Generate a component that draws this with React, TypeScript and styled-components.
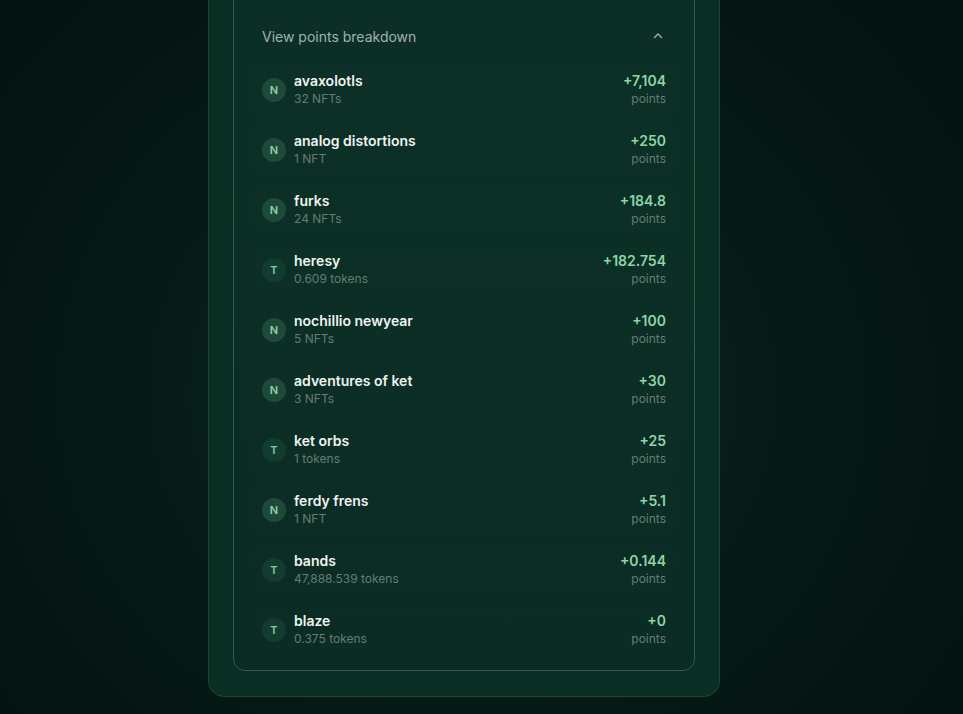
import styled, { createGlobalStyle } from "styled-components";

const Global = createGlobalStyle`
    html, body {
        margin: 0;
        padding: 0;
        height: 100%;
        overflow: hidden;
    }
    body {
        background: radial-gradient(ellipse 60% 75% at 48% 55%, #0a2a21 0%, #071b16 55%, #041310 100%);
        font-family: Inter, "Noto Sans", sans-serif;
        -webkit-font-smoothing: antialiased;
    }
`;

const Page = styled.div`
    display: flex;
    justify-content: center;
    padding-right: 35px;
    height: 714px;
    overflow: hidden;
`;
const Card = styled.div`
    width: 512px;
    box-sizing: border-box;
    margin-top: -58px;
    align-self: flex-start;
    padding: 24px 24px 25px;
    background: #0a2d24;
    border: 1px solid #1b4738;
    border-radius: 16px;
`;
const Breakdown = styled.div`
    box-sizing: border-box;
    padding: 40px 16px 14px;
    background: linear-gradient(180deg, #0b2f26 0%, #0a2b23 100%);
    border: 1px solid #2b5b49;
    border-radius: 12px;
`;
const Head = styled.div`
    display: flex;
    align-items: center;
    justify-content: space-between;
    height: 56px;
    padding: 0 14px 0 12px;
    color: #a1b3ab;
    font-size: 14px;
`;
const List = styled.div`
    display: flex;
    flex-direction: column;
    gap: 8px;
`;
const Row = styled.div`
    display: flex;
    align-items: center;
    height: 52px;
    padding: 0 12px;
    border-radius: 8px;
    background: rgba(255, 255, 255, 0.006);
`;
const Avatar = styled.div<{ $kind: "N" | "T" }>`
    width: 24px;
    height: 24px;
    border-radius: 50%;
    flex-shrink: 0;
    display: flex;
    align-items: center;
    justify-content: center;
    background: ${(p) => (p.$kind === "N" ? "#1f4a3b" : "#123c2f")};
    color: ${(p) => (p.$kind === "N" ? "#8fd2a6" : "#86c9a0")};
    font-size: 11px;
    font-weight: 600;
    margin: -1px 8px 0 0;
`;
const Info = styled.div`
    display: flex;
    flex-direction: column;
    flex: 1;
`;
const Name = styled.div`
    color: #eef3ef;
    font-size: 14px;
    font-weight: 600;
    line-height: 18px;
`;
const Sub = styled.div`
    color: #647d72;
    font-size: 12px;
    line-height: 18px;
`;
const Score = styled.div`
    display: flex;
    flex-direction: column;
    align-items: flex-end;
`;
const Value = styled.div`
    color: #8dd6a6;
    font-size: 14px;
    font-weight: 600;
    line-height: 18px;
`;

const items: { kind: "N" | "T"; name: string; sub: string; pts: string }[] = [
    { kind: "N", name: "avaxolotls", sub: "32 NFTs", pts: "+7,104" },
    { kind: "N", name: "analog distortions", sub: "1 NFT", pts: "+250" },
    { kind: "N", name: "furks", sub: "24 NFTs", pts: "+184.8" },
    { kind: "T", name: "heresy", sub: "0.609 tokens", pts: "+182.754" },
    { kind: "N", name: "nochillio newyear", sub: "5 NFTs", pts: "+100" },
    { kind: "N", name: "adventures of ket", sub: "3 NFTs", pts: "+30" },
    { kind: "T", name: "ket orbs", sub: "1 tokens", pts: "+25" },
    { kind: "N", name: "ferdy frens", sub: "1 NFT", pts: "+5.1" },
    { kind: "T", name: "bands", sub: "47,888.539 tokens", pts: "+0.144" },
    { kind: "T", name: "blaze", sub: "0.375 tokens", pts: "+0" },
];

const Chevron = () => (
    <svg width="12" height="12" viewBox="0 0 12 12" fill="none">
        <path d="M2.5 7.5L6 4l3.5 3.5" stroke="#a1b3ab" strokeWidth="1.4" strokeLinecap="round" strokeLinejoin="round" />
    </svg>
);

const App = () => {
    return (
        <Page>
            <Global />
            <Card>
                <Breakdown>
                    <Head>
                        <span>View points breakdown</span>
                        <Chevron />
                    </Head>
                    <List>
                        {items.map((it) => (
                            <Row key={it.name}>
                                <Avatar $kind={it.kind}>{it.kind}</Avatar>
                                <Info>
                                    <Name>{it.name}</Name>
                                    <Sub>{it.sub}</Sub>
                                </Info>
                                <Score>
                                    <Value>{it.pts}</Value>
                                    <Sub>points</Sub>
                                </Score>
                            </Row>
                        ))}
                    </List>
                </Breakdown>
            </Card>
        </Page>
    );
};
export default App;
